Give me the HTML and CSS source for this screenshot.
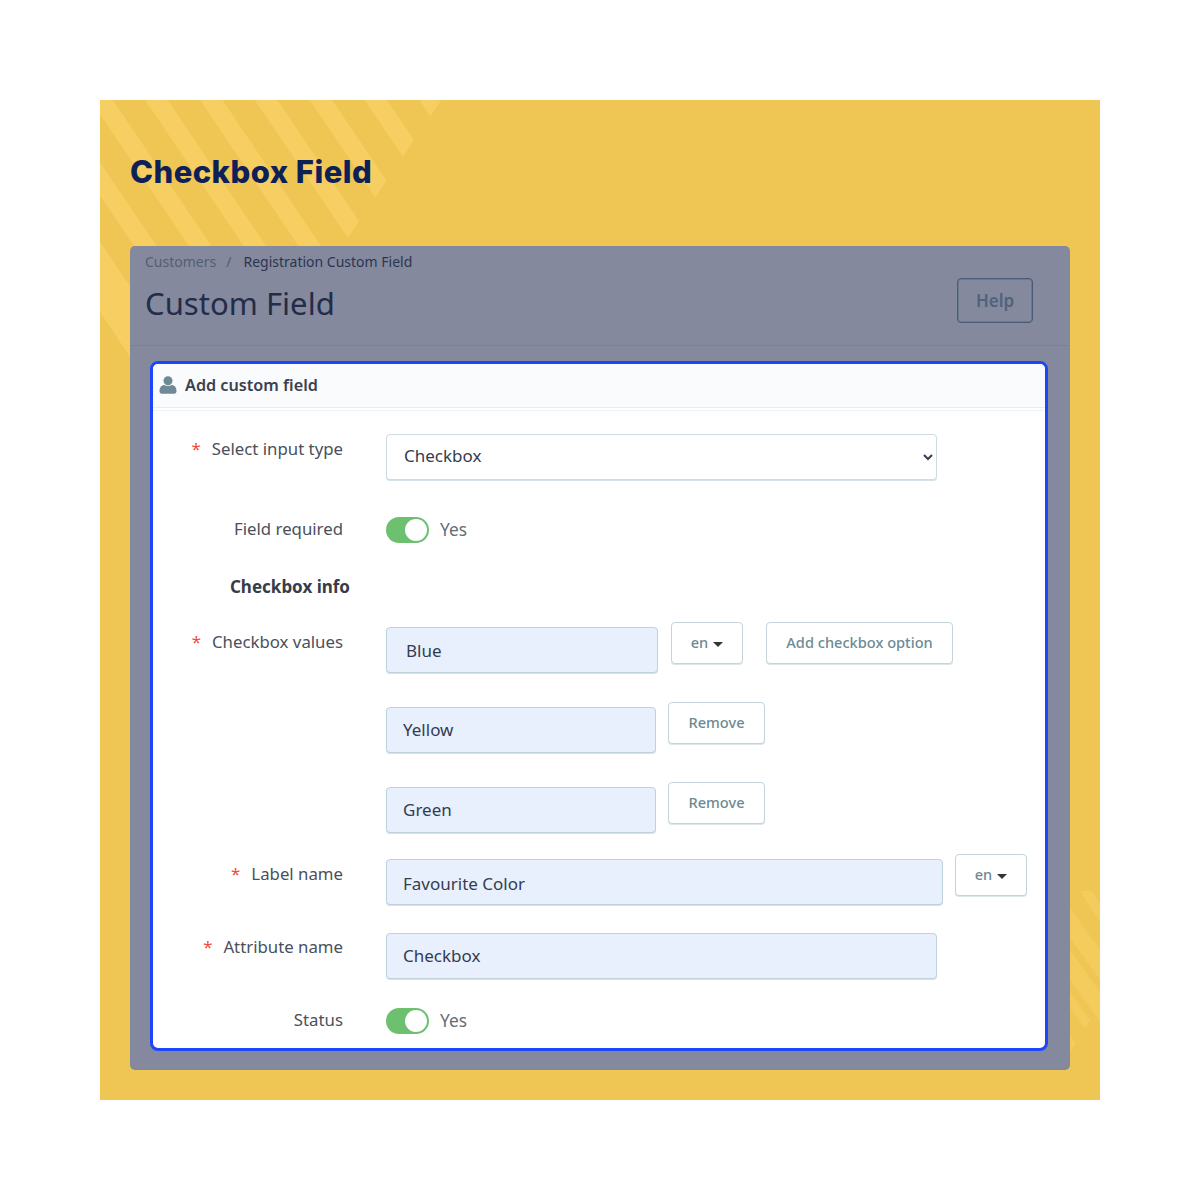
FILE: index.html
```html
<!DOCTYPE html>
<html lang="en">
<head>
<meta charset="utf-8">
<title>Checkbox Field</title>
<link rel="stylesheet" href="styles.css">
</head>
<body>
<main class="poster">
  <svg class="stripes" viewBox="0 0 1000 1000" aria-hidden="true">
    <defs><polygon id="st" points="314,40 303,57 -372,-943 -361,-960"/></defs>
    <use href="#st" transform="translate(27.5 -40.5)"/>
    <use href="#st"/>
    <use href="#st" transform="translate(-27.5 40.5)"/>
    <use href="#st" transform="translate(-55 81)"/>
    <use href="#st" transform="translate(-82.5 121.5)"/>
    <use href="#st" transform="translate(-110 162)"/>
    <use href="#st" transform="translate(-137.5 202.5)"/>
    <use href="#st" transform="translate(-165 243)"/>
    <polygon points="0,142 30,186 30,257 0,212"/>
    <g class="stripes-soft">
      <polygon points="980,791 992,791 1000,803 1000,822"/>
      <polygon points="970,808 1000,850 1000,880 970,838"/>
      <polygon points="970,850 1000,892 1000,922 970,880"/>
      <polygon points="970,892 990,920 985,928 970,908"/>
      <polygon points="970,935 976,943 970,952"/>
    </g>
  </svg>
  <h1 class="headline">Checkbox Field</h1>
  <section class="panel">
    <header class="panel-head">
      <div class="head-left">
        <nav class="crumbs"><span class="crumb-a">Customers</span><span class="crumb-sep">/</span><span class="crumb-b">Registration Custom Field</span></nav>
        <div class="page-title">Custom Field</div>
      </div>
      <button class="help" type="button">Help</button>
    </header>
    <div class="panel-body">
      <div class="card">
        <div class="card-head">
          <svg class="user-icon" viewBox="0 0 18 18" aria-hidden="true"><circle cx="9" cy="4.7" r="4.5"/><path d="M0.5 15.2c0-4 2.300-6.100 4.700-6.100 1.200 .7 2.400 1 3.800 1s2.600-.3 3.800-1c2.400 0 4.700 2.100 4.700 6.100 0 1.600-1 2.500-2.300 2.500H2.800C1.500 17.700 .5 16.800 .5 15.200z"/></svg>
          <span>Add custom field</span>
        </div>
        <form class="form">
          <div class="row row-select">
            <label class="lab lab-p3"><span class="req">*</span>Select input type</label>
            <select class="control wide plain"><option>Checkbox</option></select>
          </div>
          <div class="row row-required">
            <label class="lab">Field required</label>
            <span class="switch"><i></i></span><span class="yes">Yes</span>
          </div>
          <div class="row row-info">
            <div class="section-name">Checkbox info</div>
          </div>
          <div class="row row-values">
            <label class="lab lab-p8"><span class="req">*</span>Checkbox values</label>
            <input class="control first-val" value="Blue">
            <button class="btn lang" type="button">en<b class="caret"></b></button>
            <button class="btn add" type="button">Add checkbox option</button>
          </div>
          <div class="row row-option">
            <span class="lab"></span>
            <input class="control val" value="Yellow">
            <button class="btn remove" type="button">Remove</button>
          </div>
          <div class="row row-option">
            <span class="lab"></span>
            <input class="control val" value="Green">
            <button class="btn remove" type="button">Remove</button>
          </div>
          <div class="row row-label">
            <label class="lab lab-p8"><span class="req">*</span>Label name</label>
            <input class="control label-val" value="Favourite Color">
            <button class="btn lang lang-r" type="button">en<b class="caret"></b></button>
          </div>
          <div class="row row-attr">
            <label class="lab lab-p2"><span class="req">*</span>Attribute name</label>
            <input class="control wide" value="Checkbox">
          </div>
          <div class="row row-status">
            <label class="lab">Status</label>
            <span class="switch"><i></i></span><span class="yes">Yes</span>
          </div>
        </form>
      </div>
    </div>
  </section>
</main>
</body>
</html>
```
FILE: styles.css
```css
* { box-sizing: border-box; }
html, body { margin: 0; background: #fff; }
body { padding: 100px; font-family: "Noto Sans", "Open Sans", sans-serif; color: #3f4552; }
.poster { position: relative; width: 1000px; height: 1000px; background: #efc554; padding: 0 30px; overflow: hidden; }
.stripes { position: absolute; left: 0; top: 0; width: 1000px; height: 1000px; fill: #f6ce62; }
.stripes-soft { fill: #f4cb5d; }
.headline { position: relative; margin: 0; height: 146px; padding-top: 52px; font: 800 31px/40px Inter, "Liberation Sans", sans-serif; color: #0e2058; letter-spacing: 0.45px; }
.panel { position: relative; height: 824px; background: #84899d; border-radius: 5px; }
.panel-head { height: 100px; display: flex; justify-content: space-between; padding: 0 37px 0 15px; border-bottom: 1px solid #7c8195; }
.crumbs { display: flex; font-size: 14px; line-height: 20px; padding-top: 6px; }
.crumb-a { color: #565d75; }
.crumb-sep { color: #4f6162; margin: 0 12px 0 10px; }
.crumb-b { color: #2b3553; }
.page-title { margin-top: 9px; font-size: 31.1px; line-height: 44px; color: #232c49; }
.help { margin-top: 32px; width: 76px; height: 45px; padding: 0; background: transparent; border: 1px solid #4a5b75; box-shadow: inset 0 0 0 1px #6b7a90; border-radius: 4px; font: 600 17px "Noto Sans", sans-serif; color: #4f627e; }
.panel-body { padding: 15px 22px 19px 20px; }
.card { height: 690px; background: #fff; border: 3px solid #1f45f8; border-radius: 8px; overflow: hidden; }
.card-head { height: 44px; display: flex; align-items: center; gap: 8px; padding: 0 0 2px 6px; background: #fafbfd; border-bottom: 1px solid #e8edee; font-size: 16.2px; font-weight: 600; color: #3a4150; }
.user-icon { width: 18px; height: 18px; fill: #6f8a96; }
.form { padding-top: 24px; border-top: 2px solid #fff; box-shadow: inset 0 1px 0 #f0f3f4; }
.row { display: flex; align-items: flex-start; }
.row-select { margin-top: 0; }
.row-required { margin-top: 37px; }
.row-info { margin-top: 32px; }
.row-values { margin-top: 23px; }
.row-option { margin-top: 29px; }
.row-label { margin-top: 21px; }
.row-attr { margin-top: 28px; }
.row-status { margin-top: 29px; }
.lab { width: 190px; margin-right: 43px; font-size: 16.8px; line-height: 24px; text-align: right; color: #4a505c; flex: none; }
.lab-p2 { padding-top: 2px; }
.lab-p3 { padding-top: 3px; }
.lab-p8 { padding-top: 8px; }
.req { color: #f4493a; margin-right: 11px; }
.control { height: 46px; padding: 0 0 2px 16px; font: 17px "Noto Sans", sans-serif; color: #343c50; background: #e8f0fe; border: 1px solid #bfd2dc; box-shadow: 0 1px 0 #d5e2e8; border-radius: 4px; outline: none; }
.wide { width: 551px; }
.plain { padding: 0 0 4px 13px; background: #fff; border-color: #cddcdf; }
.first-val { width: 272px; margin-top: 5px; padding: 0 0 0 19px; }
.val { width: 270px; margin-top: 5px; }
.label-val { width: 557px; margin-top: 5px; padding: 2px 0 0 16px; }
.switch { display: flex; justify-content: flex-end; align-items: center; width: 43px; height: 26px; padding-right: 2px; background: #6cc070; border-radius: 13px; }
.switch i { display: block; width: 22px; height: 22px; background: #fff; border-radius: 50%; }
.yes { margin-left: 11px; font-size: 17.3px; line-height: 26px; color: #666b75; }
.section-name { width: 197px; text-align: right; font-size: 17px; line-height: 24px; font-weight: 700; color: #363c48; }
.btn { height: 42px; padding: 0 0 2px; background: #fff; border: 1px solid #c3d5d8; box-shadow: 0 1px 0 #dbe6e8; border-radius: 4px; font: 500 14.6px "Noto Sans", sans-serif; color: #6d8a94; }
.lang { width: 72px; margin-left: 13px; }
.lang-r { margin-left: 12px; }
.caret { display: inline-block; width: 0; height: 0; margin-left: 5px; vertical-align: middle; border-left: 5px solid transparent; border-right: 5px solid transparent; border-top: 5px solid #333; }
.add { width: 187px; margin-left: 23px; }
.remove { width: 97px; margin-left: 12px; }
```
